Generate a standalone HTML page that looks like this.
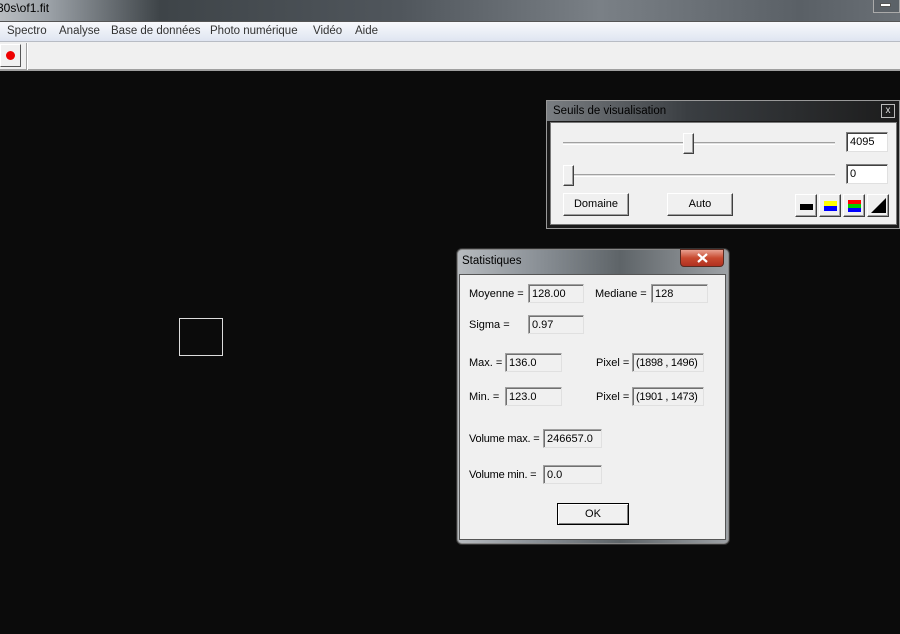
<!DOCTYPE html>
<html><head><meta charset="utf-8"><style>
*{margin:0;padding:0;box-sizing:border-box}
body{width:900px;height:634px;background:#0b0b0b;position:relative;overflow:hidden;font-family:"Liberation Sans",sans-serif;font-size:11px;color:#000}
.a{position:absolute}
.fld{position:absolute;background:#f0f0f0;border:1px solid #a0a0a0;border-right-color:#e0e0e0;border-bottom-color:#e0e0e0;box-shadow:inset 1px 1px 0 #707070;padding:3px 0 0 3px;font-size:11px;height:19px;line-height:13px}
.wf{position:absolute;background:#fff;border:1px solid #808080;border-right-color:#e0e0e0;border-bottom-color:#e0e0e0;box-shadow:inset 1px 1px 0 #404040;padding:3px 0 0 3px;height:20px;line-height:13px}
.btn{position:absolute;background:#f0f0f0;border:1px solid #fff;border-right-color:#404040;border-bottom-color:#404040;box-shadow:inset -1px -1px 0 #a0a0a0;text-align:center;font-size:11px}
.lbl{position:absolute;font-size:11px}
</style></head><body>
<div class="a" style="left:0;top:0;width:900px;height:21px;background:linear-gradient(90deg,#b8bcc0 0,#9aa0a6 50px,#3e4448 160px,#50565c 400px,#7a8086 600px,#5a6066 800px,#6a7076 900px)"></div>
<div class="a" style="left:-3px;top:1px;font-size:12px;color:#000">30s\of1.fit</div>
<div class="a" style="left:873px;top:0;width:27px;height:13px;border:1px solid #aaa;border-top:none;background:#5c6268"><div class="a" style="left:6px;top:3px;width:11px;height:4px;background:#fff;border:1px solid #555"></div></div>
<div class="a" style="left:0;top:21px;width:900px;height:21px;background:linear-gradient(#f8f9fc,#dfe5f1);border-top:1px solid #555;border-bottom:1px solid #b8bcc4"></div>
<div class="a" style="left:7px;top:25px;font-size:11.5px;color:#333">Spectro</div>
<div class="a" style="left:59px;top:25px;font-size:11.5px;color:#333">Analyse</div>
<div class="a" style="left:111px;top:25px;font-size:11.5px;color:#333">Base de données</div>
<div class="a" style="left:210px;top:25px;font-size:11.5px;color:#333">Photo numérique</div>
<div class="a" style="left:313px;top:25px;font-size:11.5px;color:#333">Vidéo</div>
<div class="a" style="left:355px;top:25px;font-size:11.5px;color:#333">Aide</div>
<div class="a" style="left:0;top:42px;width:900px;height:29px;background:#f0f0f0;border-bottom:2px solid #a0a0a0"></div>
<div class="a" style="left:0;top:44px;width:21px;height:23px;background:#f0f0f0;border:1px solid #fff;border-right-color:#555;border-bottom-color:#555"><div class="a" style="left:5px;top:6px;width:9px;height:9px;border-radius:50%;background:#e00"></div></div>
<div class="a" style="left:26px;top:43px;width:2px;height:27px;border-left:1px solid #a0a0a0;border-right:1px solid #fff"></div>
<div class="a" style="left:179px;top:318px;width:44px;height:38px;border:1px solid #ddd"></div>

<!-- Seuils -->
<div class="a" style="left:546px;top:100px;width:354px;height:129px;background:#1a1a1a;border:1px solid #999"></div>
<div class="a" style="left:547px;top:101px;width:352px;height:20px;background:linear-gradient(90deg,#7a7e82,#3a3e42 40%,#1c1c1c)"></div>
<div class="a" style="left:553px;top:105px;font-size:11.5px;color:#000">Seuils de visualisation</div>
<div class="a" style="left:881px;top:104px;width:14px;height:14px;border:1px solid #bbb;color:#ddd;font-size:10px;text-align:center;line-height:12px">x</div>
<div class="a" style="left:550px;top:122px;width:347px;height:103px;background:#f0f0f0;border:1px solid #777"></div>
<div class="a" style="left:563px;top:142px;width:272px;height:3px;border-top:1px solid #a0a0a0;border-bottom:1px solid #fff;background:#e0e0e0"></div>
<div class="btn" style="left:683px;top:133px;width:11px;height:21px"></div>
<div class="a" style="left:563px;top:174px;width:272px;height:3px;border-top:1px solid #a0a0a0;border-bottom:1px solid #fff;background:#e0e0e0"></div>
<div class="btn" style="left:563px;top:165px;width:11px;height:21px"></div>
<div class="wf" style="left:846px;top:132px;width:42px">4095</div>
<div class="wf" style="left:846px;top:164px;width:42px">0</div>
<div class="btn" style="left:563px;top:193px;width:66px;height:23px;line-height:21px">Domaine</div>
<div class="btn" style="left:667px;top:193px;width:66px;height:23px;line-height:21px">Auto</div>
<div class="btn" style="left:795px;top:194px;width:22px;height:23px"><div class="a" style="left:4px;top:9px;width:13px;height:6px;background:#000"></div></div>
<div class="btn" style="left:819px;top:194px;width:22px;height:23px"><div class="a" style="left:4px;top:6px;width:13px;height:5px;background:#ff0"></div><div class="a" style="left:4px;top:11px;width:13px;height:5px;background:#00f"></div></div>
<div class="btn" style="left:843px;top:194px;width:22px;height:23px"><div class="a" style="left:4px;top:5px;width:13px;height:4px;background:#f00"></div><div class="a" style="left:4px;top:9px;width:13px;height:4px;background:#0c0"></div><div class="a" style="left:4px;top:13px;width:13px;height:4px;background:#00f"></div></div>
<div class="btn" style="left:867px;top:194px;width:22px;height:23px"><svg class="a" style="left:3px;top:3px" width="15" height="15"><path d="M15 0V15H0Z" fill="#000"/></svg></div>

<!-- Statistiques -->
<div class="a" style="left:456px;top:248px;width:274px;height:297px;border-radius:6px;background:linear-gradient(90deg,#b8bcc0,#8a9096 30%,#5e6468 60%,#9ea2a6);border:1px solid #333;box-shadow:0 0 0 1px #888 inset"></div>
<div class="a" style="left:462px;top:255px;font-size:11.5px">Statistiques</div>
<div class="a" style="left:680px;top:249px;width:44px;height:18px;border-radius:0 0 4px 4px;background:linear-gradient(#e8a090,#c84a30 50%,#b03020);border:1px solid #5a2a20"><svg class="a" style="left:16px;top:3px" width="11" height="10"><path d="M1 1L10 9M10 1L1 9" stroke="#fff" stroke-width="2.2"/></svg></div>
<div class="a" style="left:459px;top:274px;width:267px;height:266px;background:#f0f0f0;border:1px solid #555"></div>
<div class="lbl" style="left:469px;top:288px">Moyenne =</div>
<div class="fld" style="left:528px;top:284px;width:56px">128.00</div>
<div class="lbl" style="left:595px;top:288px">Mediane =</div>
<div class="fld" style="left:651px;top:284px;width:57px">128</div>
<div class="lbl" style="left:469px;top:319px">Sigma =</div>
<div class="fld" style="left:528px;top:315px;width:56px">0.97</div>
<div class="lbl" style="left:469px;top:357px">Max. =</div>
<div class="fld" style="left:505px;top:353px;width:57px">136.0</div>
<div class="lbl" style="left:596px;top:357px">Pixel =</div>
<div class="fld" style="left:632px;top:353px;width:72px;letter-spacing:-0.3px">(1898 , 1496)</div>
<div class="lbl" style="left:469px;top:391px">Min. =</div>
<div class="fld" style="left:505px;top:387px;width:57px">123.0</div>
<div class="lbl" style="left:596px;top:391px">Pixel =</div>
<div class="fld" style="left:632px;top:387px;width:72px;letter-spacing:-0.3px">(1901 , 1473)</div>
<div class="lbl" style="left:469px;top:433px;letter-spacing:-0.2px">Volume max. =</div>
<div class="fld" style="left:543px;top:429px;width:59px">246657.0</div>
<div class="lbl" style="left:469px;top:469px;letter-spacing:-0.2px">Volume min. =</div>
<div class="fld" style="left:543px;top:465px;width:59px">0.0</div>
<div class="btn" style="left:557px;top:503px;width:72px;height:22px;line-height:20px;border:1px solid #000;box-shadow:inset 1px 1px 0 #fff,inset -1px -1px 0 #808080">OK</div>
</body></html>
